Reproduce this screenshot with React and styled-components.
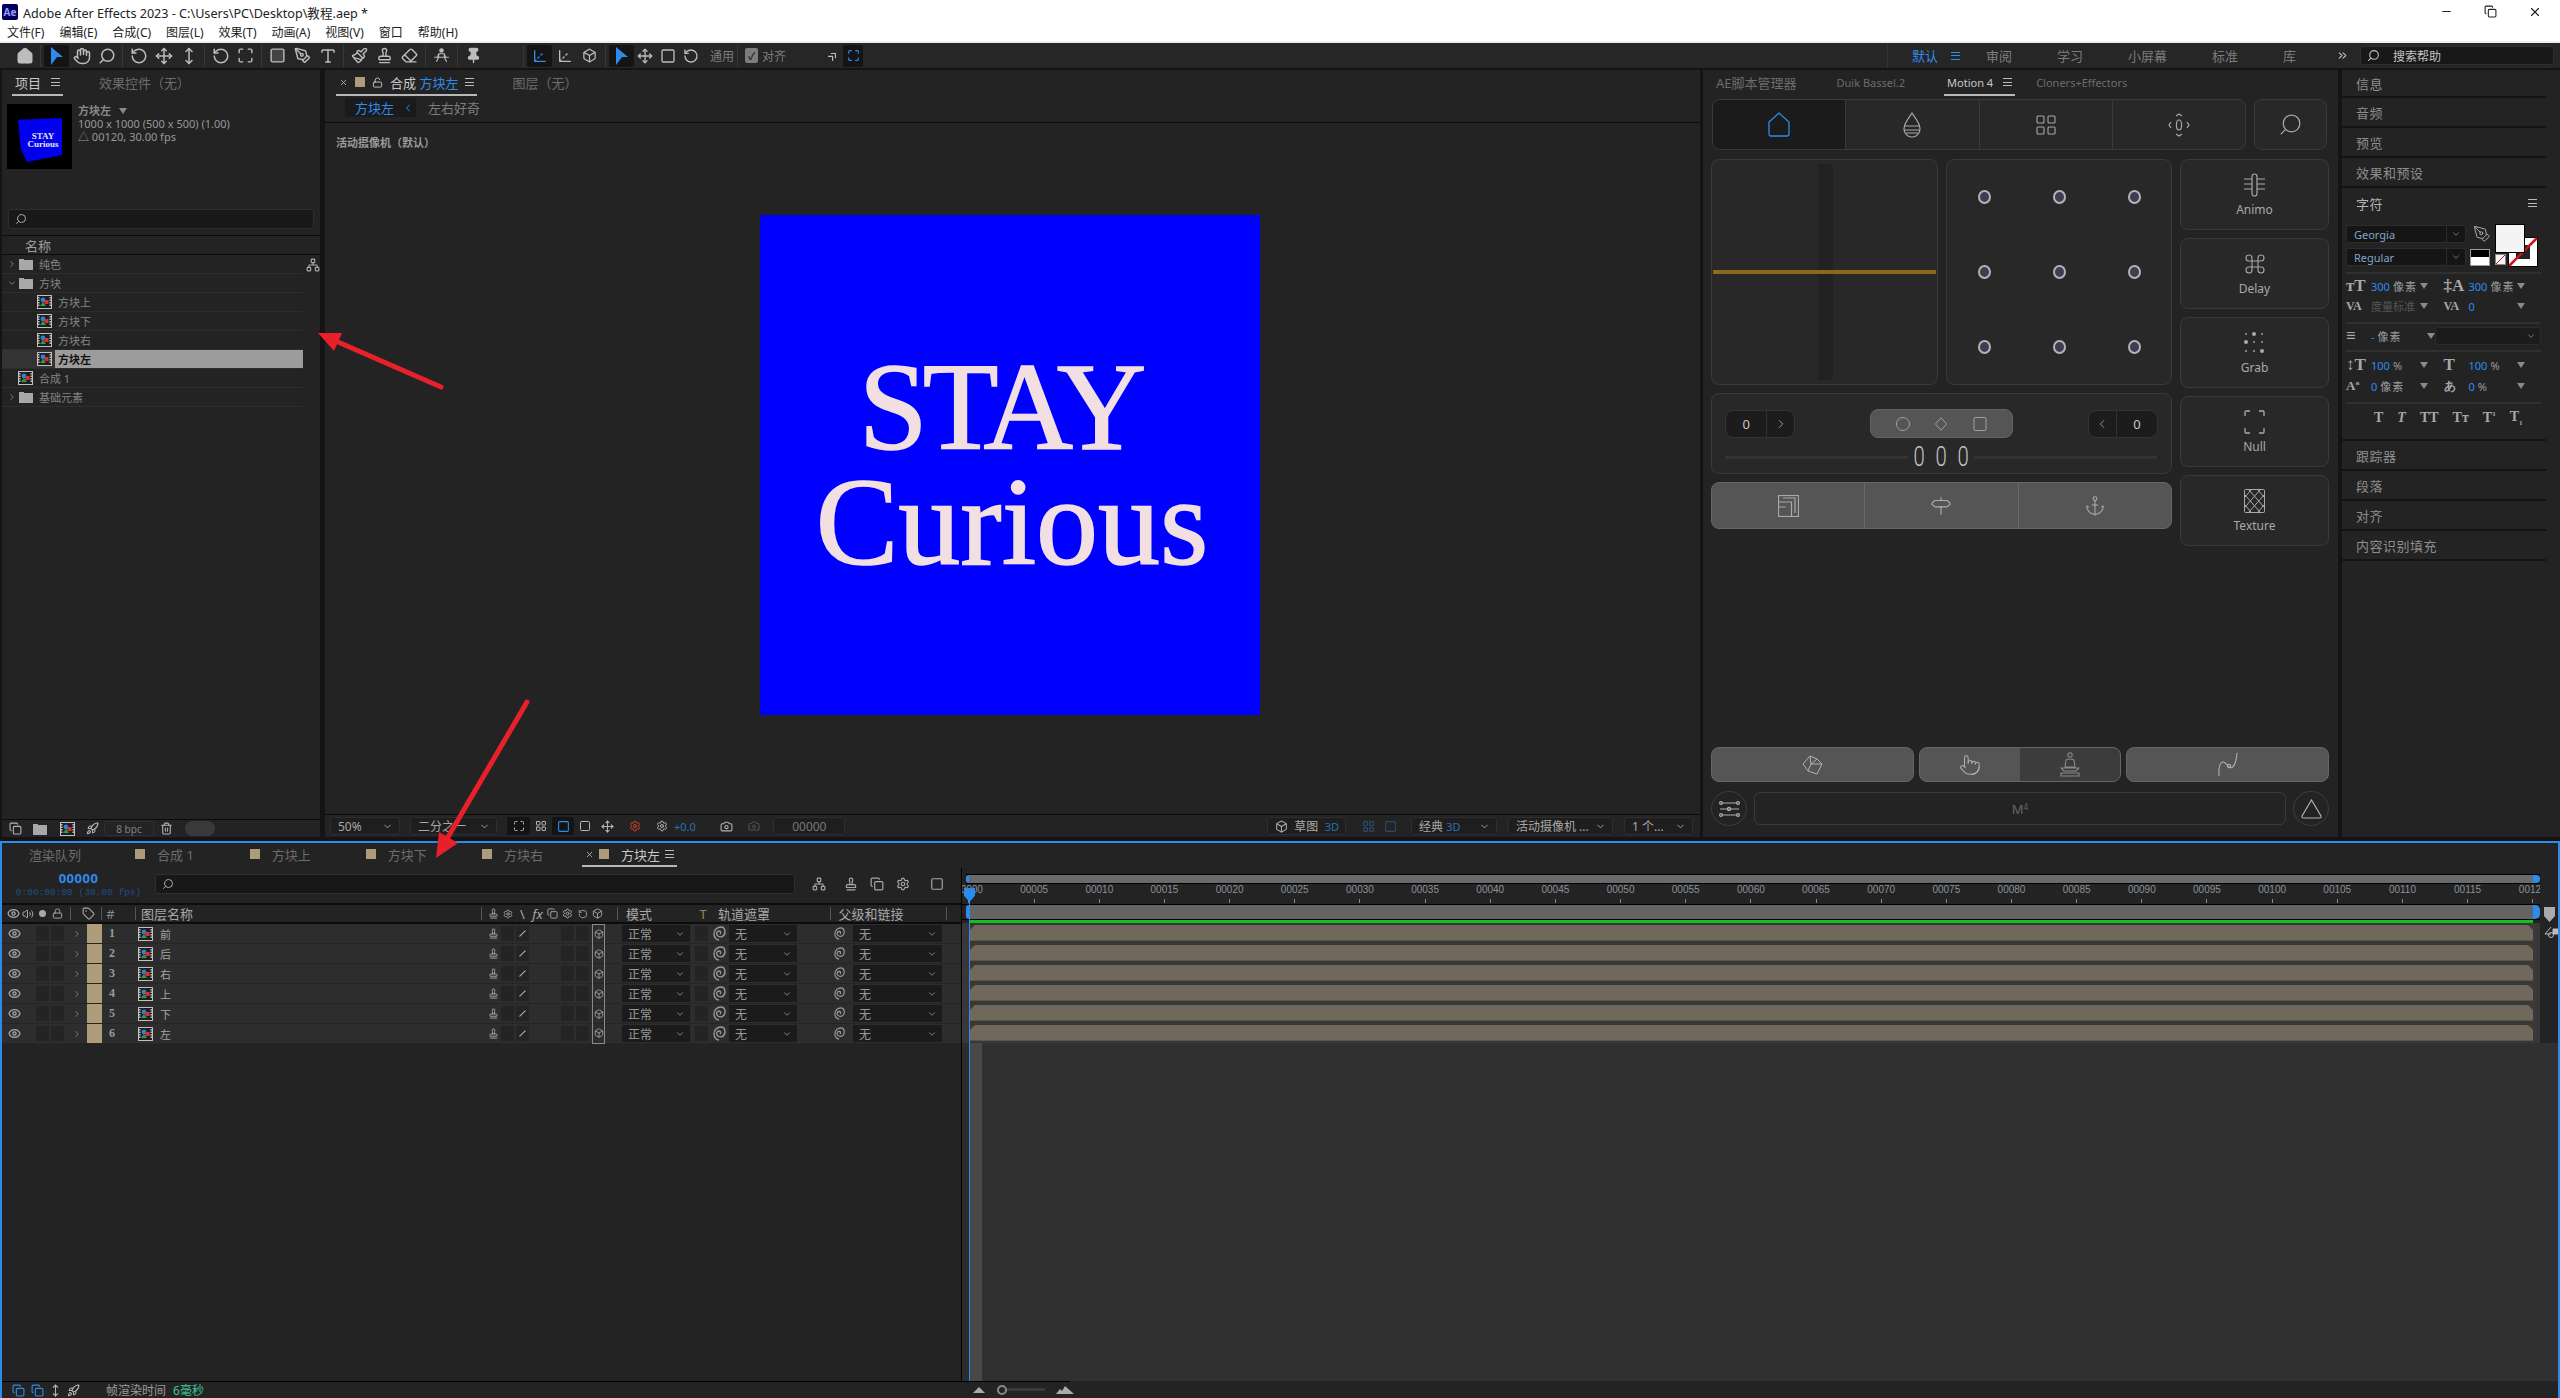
import React from 'react'
import styled, { createGlobalStyle } from 'styled-components'
import {
	Anchor, Axis3d, Box, ChevronDown, ChevronLeft, ChevronRight, ChevronsRight, Command, Eraser, Eye, Hand, Home,
	LayoutGrid, Lock, LockOpen, Maximize, Minus, Move, MoveVertical, Paintbrush, PenTool, Pin, Pointer, RotateCcw,
	Search, Signpost, Square, Stamp, Tag, Type, Volume2, X, Copy, Camera, Settings, Trash2, Rocket, Network
} from 'lucide-react'

const BLUE = '#2d8ceb'
const SANS = '"Noto Sans", "Noto Sans CJK SC", sans-serif'

const GlobalStyle = createGlobalStyle`
	html, body { margin: 0; background: #141414; overflow: hidden; }
	* { box-sizing: border-box; }
	body { font-family: ${SANS}; font-size: 12px; color: #a8a8a8; }
	svg { display: block; flex-shrink: 0; }
`

const Shell = styled.div`
	width: 2560px;
	height: 1398px;
	display: flex;
	flex-direction: column;
	position: relative;
	overflow: hidden;
`

const TitleBar = styled.div`
	height: 22px;
	background: #fff;
	color: #222;
	display: flex;
	align-items: center;
	padding: 2px 0 0 2px;
	font-size: 12.6px;
`

const AeLogo = styled.div`
	width: 16px;
	height: 16px;
	background: #00005b;
	color: #9999ff;
	border-radius: 2px;
	font-size: 10px;
	font-weight: 700;
	display: flex;
	align-items: center;
	justify-content: center;
	margin-right: 5px;
`

const WinButtons = styled.div`
	margin-left: auto;
	display: flex;
	color: #222;
	& > svg { margin-right: 31px; }
	& > svg:last-child { margin-right: 18px; }
`

const MenuBar = styled.div`
	height: 21px;
	background: #fff;
	border-bottom: 2px solid #eee;
	color: #222;
	display: flex;
	align-items: center;
	gap: 15px;
	padding-left: 7px;
	font-size: 12px;
`

const Toolbar = styled.div`
	height: 27px;
	background: #262626;
	border-bottom: 2px solid #141414;
	display: flex;
	align-items: center;
	padding-left: 12px;
`

const ToolGroup = styled.div`
	display: flex;
	align-items: center;
	height: 22px;
	margin-left: ${p => p.$ml ?? 3}px;
	padding-left: ${p => p.$plain ? 0 : 3}px;
	border-left: ${p => p.$plain ? 'none' : '1px solid #383838'};
`

const ToolSlot = styled.div`
	width: ${p => p.$w || 25}px;
	height: 22px;
	display: flex;
	align-items: center;
	justify-content: center;
	color: #bcbcbc;
	${p => p.$on && `
		background: #141414;
		border-radius: 3px;
		color: ${BLUE};
	`}
`

const ToolText = styled.span`
	color: #7c7c7c;
	font-size: 12px;
	margin-left: ${p => p.$ml || 0}px;
`

const CheckBox = styled.div`
	width: 13px;
	height: 15px;
	background: #7d7d7d;
	border-radius: 2px;
	color: #222;
	font-size: 10px;
	font-weight: 700;
	display: flex;
	align-items: center;
	justify-content: center;
	margin: 0 4px;
`

const Workspace = styled.div`
	margin-left: auto;
	width: 673px;
	height: 25px;
	border-left: 1px solid #333;
	display: flex;
	align-items: center;
	padding-left: 24px;
`

const WsItem = styled.span`
	font-size: 13px;
	color: ${p => p.$active ? BLUE : '#7c7c7c'};
	margin-right: ${p => p.$mr ?? 45}px;
`

const SearchHelp = styled.div`
	width: 194px;
	height: 19px;
	background: #181818;
	border: 1px solid #2e2e2e;
	border-radius: 3px;
	display: flex;
	align-items: center;
	padding-left: 6px;
	gap: 13px;
	color: #c4c4c4;
	font-size: 12px;
	margin-left: 11px;
`

const TopRow = styled.div`
	height: 767px;
	display: flex;
`

const Panel = styled.div`
	width: ${p => p.$w}px;
	margin-left: ${p => p.$ml || 0}px;
	background: #232323;
	display: flex;
	flex-direction: column;
	flex-shrink: 0;
`

const TabRow = styled.div`
	height: 26px;
	flex-shrink: 0;
	display: flex;
	align-items: flex-start;
	padding-left: ${p => p.$pl || 0}px;
`

const Tab = styled.div`
	height: 26px;
	display: flex;
	align-items: center;
	gap: ${p => p.$gap ?? 9}px;
	padding: 0 3px;
	font-size: ${p => p.$fs || 13}px;
	margin-left: ${p => p.$ml || 0}px;
	color: ${p => p.$active ? '#c8c8c8' : '#6c6c6c'};
	border-bottom: 2px solid ${p => p.$active ? '#b8b8b8' : 'transparent'};
	white-space: nowrap;
`

const TlTab = styled(Tab)`
	height: 24px;
`

const Swatch = styled.span`
	display: inline-block;
	width: 10px;
	height: 10px;
	background: #ad9c79;
	flex-shrink: 0;
`

const BlueText = styled.span`
	color: ${BLUE};
`

const Burger = styled.span`
	width: 9px;
	height: 8px;
	flex-shrink: 0;
	border-top: 1px solid currentColor;
	border-bottom: 1px solid currentColor;
	position: relative;
	color: #bbb;
	&::after {
		content: '';
		position: absolute;
		left: 0;
		right: 0;
		top: 2.5px;
		height: 1px;
		background: currentColor;
	}
`

/* project panel */
const ProjectInfo = styled.div`
	height: 113px;
	flex-shrink: 0;
	display: flex;
	padding: 8px 0 0 5px;
`

const Thumb = styled.div`
	width: 65px;
	height: 65px;
	background: #000;
	position: relative;
	margin-right: 6px;
`

const ThumbCube = styled.div`
	position: absolute;
	left: 11px;
	top: 14px;
	width: 44px;
	height: 44px;
	background: #0000ee;
	clip-path: polygon(0 4%, 100% 0, 100% 84%, 20% 100%, 6% 70%);
	color: #e8e8e8;
	font: 700 9px/8px "Liberation Serif", serif;
	text-align: center;
	padding-top: 14px;
	padding-left: 6px;
`

const InfoLines = styled.div`
	font-size: 11px;
	line-height: 13px;
	color: #989898;
	& > b { color: #888; display: flex; align-items: center; gap: 8px; }
`

const SearchField = styled.div`
	height: 20px;
	flex-shrink: 0;
	margin: 0 6px;
	background: #181818;
	border: 1px solid #2e2e2e;
	border-radius: 3px;
	display: flex;
	align-items: center;
	padding-left: 6px;
	color: #aaa;
	width: ${p => p.$w ? `${p.$w}px` : 'auto'};
`

const NameHeader = styled.div`
	height: 20px;
	margin-top: 6px;
	flex-shrink: 0;
	border-top: 1px solid #0c0c0c;
	border-bottom: 1px solid #0c0c0c;
	font-size: 13px;
	display: flex;
	align-items: center;
	padding-left: 23px;
	color: #9c9c9c;
`

const FileList = styled.div`
	flex: 1;
	display: flex;
	position: relative;
`

const FileRows = styled.div`
	width: 301px;
`

const FileRow = styled.div`
	height: 19px;
	display: flex;
	align-items: center;
	border-bottom: 1px solid #2d2d2d;
	font-size: 11px;
	color: #838383;
	padding-left: ${p => p.$pl}px;
	${p => p.$selected && 'background: #333;'}
`

const FileName = styled.span`
	margin-left: 3px;
	flex: 1;
	height: 100%;
	display: flex;
	align-items: center;
	padding-left: 3px;
	${p => p.$selected && `
		background: #9c9c9c;
		color: #111;
		font-weight: 700;
	`}
`

const HierSlot = styled.div`
	padding: 3px 0 0 3px;
	color: #aaa;
`

const PanelFooter = styled.div`
	height: ${p => p.$h}px;
	flex-shrink: 0;
	border-top: 1px solid #0c0c0c;
	display: flex;
	align-items: center;
	padding-left: ${p => p.$pl || 0}px;
	padding-right: ${p => p.$pr || 0}px;
	color: #b4b4b4;
`

const BpcBox = styled.div`
	width: 50px;
	height: 15px;
	border: 1px solid #2e2e2e;
	border-radius: 2px;
	font-size: 10px;
	color: #808080;
	display: flex;
	align-items: center;
	justify-content: center;
`

const FooterPill = styled.div`
	width: 30px;
	height: 15px;
	border-radius: 8px;
	background: #3a3a3a;
	margin-left: 7px;
`

const FooterIcon = styled.div`
	width: ${p => p.$w || 24}px;
	height: 18px;
	display: flex;
	align-items: center;
	justify-content: center;
	margin-left: ${p => p.$ml || 0}px;
	color: ${p => p.$c || '#b4b4b4'};
	${p => p.$box && `
		background: #141414;
		border-radius: 2px;
	`}
`

/* comp viewer */
const CrumbRow = styled.div`
	height: 27px;
	flex-shrink: 0;
	border-bottom: 1px solid #0c0c0c;
	display: flex;
	align-items: center;
	padding: 0 0 3px 20px;
	font-size: 13px;
	color: #7c7c7c;
`

const Crumb = styled.div`
	width: 71px;
	height: 19px;
	background: #1a1a1a;
	border-radius: 3px;
	display: flex;
	align-items: center;
	justify-content: space-between;
	color: ${BLUE};
	padding: 0 2px 0 10px;
	margin-right: 12px;
`

const CompArea = styled.div`
	flex: 1;
	position: relative;
	display: flex;
	align-items: center;
	justify-content: center;
	padding: 0 5px 7px 0;
`

const ViewerLabel = styled.div`
	position: absolute;
	left: 11px;
	top: 11px;
	font-size: 11px;
	font-weight: 700;
	color: #9a9a9a;
`

const Canvas = styled.div`
	width: 500px;
	height: 500px;
	background: #0000ff;
	color: #f2dfe2;
	font-family: "Liberation Serif", "Noto Serif", serif;
	font-size: 124px;
	line-height: 115px;
	text-align: center;
	padding: 135px 0 0 4px;
	-webkit-text-stroke: 1.5px #f2dfe2;
`

const CanvasTop = styled.div`
	letter-spacing: -5px;
	padding-right: 24px;
`

const FooterSelect = styled.div`
	width: ${p => p.$w}px;
	height: 18px;
	margin-left: ${p => p.$ml || 0}px;
	border: 1px solid #2e2e2e;
	border-radius: 3px;
	background: #1e1e1e;
	display: flex;
	align-items: center;
	justify-content: space-between;
	padding: 0 6px 0 7px;
	font-size: 12px;
	color: #a8a8a8;
	white-space: nowrap;
`

const DimBlue = styled.span`
	color: #2a6fb5;
	font-size: 11px;
	margin-left: ${p => p.$ml || 0}px;
`

/* motion */
const MotionBody = styled.div`
	flex: 1;
	display: flex;
	flex-direction: column;
	padding: 3px 9px 11px 8px;
`

const NavLine = styled.div`
	display: flex;
	gap: 8px;
	padding-left: 1px;
`

const NavGroup = styled.div`
	width: ${p => p.$w}px;
	height: 51px;
	display: flex;
	border: 1px solid #3a3a3a;
	border-radius: 8px;
	overflow: hidden;
	background: #282828;
`

const NavCell = styled.div`
	flex: 1;
	display: flex;
	align-items: center;
	justify-content: center;
	color: #a8a8a8;
	background: ${p => p.$on ? '#1b1b1b' : 'transparent'};
	& + & { border-left: 1px solid #3a3a3a; }
`

const MotionGrid = styled.div`
	display: flex;
	gap: 8px;
	margin-top: 9px;
`

const MotionLeft = styled.div`
	width: 461px;
	display: flex;
	flex-direction: column;
	gap: 8px;
`

const BoxPair = styled.div`
	display: flex;
	gap: 8px;
`

const FrameBox = styled.div`
	width: ${p => p.$w ? `${p.$w}px` : 'auto'};
	height: ${p => p.$h}px;
	border: 1px solid #3a3a3a;
	border-radius: 8px;
	background: #282828;
`

const GraphBox = styled(FrameBox)`
	display: flex;
	align-items: center;
	padding: 0 1px;
	background: linear-gradient(to right, #282828 106px, #222 106px, #222 121px, #282828 121px);
	background-size: 100% 216px;
	background-position: 0 4px;
	background-repeat: no-repeat;
	background-color: #282828;
`

const GoldLine = styled.div`
	width: 100%;
	height: 4px;
	background: #8b6a17;
`

const DotGrid = styled(FrameBox)`
	display: grid;
	grid-template-columns: repeat(3, 75px);
	grid-template-rows: repeat(3, 75px);
	justify-content: center;
	align-content: center;
	justify-items: center;
	align-items: center;
`

const Dot = styled.div`
	width: 13px;
	height: 14px;
	border-radius: 50%;
	border: 2px solid #b4b4b4;
	background: #3e3d52;
`

const ShapeBox = styled(FrameBox)`
	padding: 15px 13px 0;
`

const ShapeRow = styled.div`
	display: flex;
	justify-content: space-between;
	align-items: center;
`

const Stepper = styled.div`
	width: 70px;
	height: 28px;
	background: #1c1c1c;
	border: 1px solid #333;
	border-radius: 8px;
	display: flex;
	align-items: center;
	color: #c8c8c8;
	font-size: 13px;
`

const StepNum = styled.div`
	flex: ${p => p.$grow};
	height: 100%;
	display: flex;
	align-items: center;
	justify-content: center;
	& + & { border-left: 1px solid #333; }
`

const ShapeGroup = styled.div`
	width: 143px;
	height: 29px;
	background: #555;
	border: 1px solid #636363;
	border-radius: 8px;
	display: flex;
	align-items: center;
	justify-content: space-around;
	padding: 0 13px;
	color: #a0a0a0;
`

const SliderRow = styled.div`
	display: flex;
	align-items: center;
	margin-top: 9px;
	padding-right: 1px;
`

const SliderTrack = styled.div`
	flex: 1;
	height: 3px;
	background: #333;
`

const BigDigit = styled.span`
	width: 22px;
	text-align: center;
	font: 300 27px/20px Roboto, sans-serif;
	color: #c4c4c4;
	transform: scaleX(.75);
`

const ActionBar = styled.div`
	height: ${p => p.$h}px;
	width: ${p => p.$w ? `${p.$w}px` : 'auto'};
	border: 1px solid #666;
	border-radius: 8px;
	background: #555;
	display: flex;
	overflow: hidden;
`

const ActionCell = styled.div`
	flex: 1;
	display: flex;
	align-items: center;
	justify-content: center;
	color: ${p => p.$dim ? '#8a8a8a' : '#b0b0b0'};
	background: ${p => p.$dim ? '#3c3c3c' : 'transparent'};
	${p => p.$line && 'border-left: 1px solid #6a6a6a;'}
`

const MotionRight = styled.div`
	width: 149px;
	display: flex;
	flex-direction: column;
	gap: 8px;
`

const ToolCard = styled.div`
	height: 71px;
	border: 1px solid #3a3a3a;
	border-radius: 8px;
	background: #282828;
	display: flex;
	flex-direction: column;
	align-items: center;
	padding-top: 13px;
	gap: 5px;
	color: #a8a8a8;
	font-size: 12px;
	line-height: 15px;
`

const MotionBottom = styled.div`
	margin-top: auto;
	display: flex;
	flex-direction: column;
	gap: 9px;
`

const BottomRow = styled.div`
	display: flex;
	gap: ${p => p.$gap}px;
	align-items: center;
`

const RoundBtn = styled.div`
	width: 36px;
	height: 35px;
	border: 1px solid #3a3a3a;
	border-radius: 50%;
	display: flex;
	align-items: center;
	justify-content: center;
	color: #b0b0b0;
`

const MBar = styled.div`
	flex: 1;
	height: 33px;
	border: 1px solid #3a3a3a;
	border-radius: 6px;
	display: flex;
	align-items: center;
	justify-content: center;
	color: #666;
	font-size: 13px;
	& sup { font-size: 8px; margin-top: -4px; }
`

/* right stack */
const StackItem = styled.div`
	height: ${p => p.$h || 30}px;
	display: flex;
	align-items: center;
	padding-left: 14px;
	font-size: 13px;
	color: #8e8e8e;
	letter-spacing: 0.5px;
	border-bottom: 2px solid #141414;
	width: 204px;
`

const StackHeader = styled(StackItem)`
	border-bottom: none;
	color: #b4b4b4;
	justify-content: space-between;
	padding-right: 9px;
	height: 30px;
`

const CharBody = styled.div`
	width: 204px;
	height: 223px;
	padding: 7px 5px 0 4px;
	border-bottom: 2px solid #141414;
`

const FontArea = styled.div`
	display: flex;
	height: 42px;
`

const FontSelects = styled.div`
	width: 123px;
	display: flex;
	flex-direction: column;
	gap: 5px;
`

const FontSelect = styled.div`
	height: 18px;
	background: #151515;
	border: 1px solid #2c2c2c;
	border-radius: 2px;
	display: flex;
	align-items: center;
	justify-content: space-between;
	padding-left: 7px;
	color: #7fa6cc;
	font-size: 11px;
	& > span:last-child {
		width: 19px;
		height: 100%;
		border-left: 1px solid #2c2c2c;
		display: flex;
		align-items: center;
		justify-content: center;
		color: #888;
	}
`

const ColorArea = styled.div`
	position: relative;
	width: 72px;
	height: 42px;
	margin-left: 4px;
`

const ColorTop = styled.div`
	position: absolute;
	left: 25px;
	top: -1px;
	width: 30px;
	height: 29px;
	background: #f4f4f4;
	border: 1px solid #000;
`

const ColorBack = styled.svg`
	position: absolute;
	left: 38px;
	top: 12px;
`

const MiniBW = styled.div`
	position: absolute;
	left: 0;
	top: 24px;
	width: 20px;
	height: 17px;
	border: 1px solid #999;
	background: linear-gradient(#000 50%, #fff 50%);
`

const Dropper = styled.div`
	position: absolute;
	left: 3px;
	top: 0;
	color: #b0b0b0;
`

const NoneSwatch = styled.svg`
	position: absolute;
	left: 25px;
	top: 29px;
`

const CharDivider = styled.div`
	height: 2px;
	background: #303030;
	margin: ${p => p.$m || '5px 0 2px'};
	width: 195px;
`

const CharRow = styled.div`
	display: flex;
	height: ${p => p.$h || 20}px;
	align-items: center;
`

const CharHalf = styled.div`
	width: 105px;
	display: flex;
	align-items: center;
	padding-right: 16px;
	color: #b0b0b0;
`

const CharIcon = styled.span`
	width: 25px;
	flex-shrink: 0;
	font: 700 ${p => p.$fs || 17}px/18px "Liberation Serif", serif;
	color: #a8a8a8;
	white-space: nowrap;
`

const CharValue = styled.span`
	flex: 1;
	font-size: 11px;
	color: ${p => p.$dim ? '#555' : BLUE};
	white-space: nowrap;
	& > em { font-style: normal; color: #9c9c9c; margin-left: 3px; letter-spacing: 1px; }
`

const Caret = styled.span`
	width: 0;
	height: 0;
	border-left: 4px solid transparent;
	border-right: 4px solid transparent;
	border-top: 6px solid #8a8a8a;
	flex-shrink: 0;
`

const LeadSelect = styled.div`
	width: 106px;
	height: 18px;
	background: #1c1c1c;
	border: 1px solid #2c2c2c;
	border-radius: 3px;
	display: flex;
	align-items: center;
	justify-content: flex-end;
	padding-right: 4px;
	color: #888;
`

const LeadHalf = styled(CharHalf)`
	width: 89px;
	padding-right: 0;
`

const StyleRow = styled.div`
	display: flex;
	align-items: center;
	height: 24px;
	padding-left: 28px;
	gap: 14px;
	font: 700 14px/1 "Liberation Serif", serif;
	color: #a8a8a8;
	& sup, & sub { font-size: 7px; }
`

/* timeline */
const Timeline = styled.div`
	margin-top: 4px;
	flex: 1;
	background: #232323;
	border-top: 2px solid ${BLUE};
	border-left: 2px solid ${BLUE};
	border-right: 2px solid ${BLUE};
	display: flex;
	flex-direction: column;
	min-height: 0;
`

const TlTabs = styled.div`
	height: 25px;
	flex-shrink: 0;
	display: flex;
	padding-left: 24px;
`

const TlMain = styled.div`
	flex: 1;
	display: flex;
	min-height: 0;
`

const TlLeft = styled.div`
	width: 960px;
	flex-shrink: 0;
	display: flex;
	flex-direction: column;
	border-right: 1px solid #000;
`

const TlTools = styled.div`
	height: 37px;
	flex-shrink: 0;
	border-bottom: 2px solid #0c0c0c;
	display: flex;
	align-items: center;
	padding-bottom: 4px;
`

const TimeBlock = styled.div`
	width: 153px;
	margin-right: -6px;
	text-align: center;
	padding-top: 4px;
	& > b { display: block; color: ${BLUE}; font: 700 13px/15px "Noto Sans", sans-serif; letter-spacing: 0.5px; }
	& > span { display: block; color: #1d4f86; font: 9.5px/14px "Liberation Mono", monospace; white-space: nowrap; }
`

const TlHeader = styled.div`
	height: 19px;
	flex-shrink: 0;
	border-bottom: 2px solid #0c0c0c;
	display: flex;
	align-items: center;
	font-size: 13px;
	color: #a4a4a4;
`

const HeadSep = styled.div`
	width: 1px;
	height: 13px;
	flex-shrink: 0;
	background: #555;
	margin-left: ${p => p.$ml || 0}px;
`

const TinyDot = styled.span`
	width: 7px;
	height: 7px;
	border-radius: 50%;
	background: #a8a8a8;
`

const LayerRow = styled.div`
	height: 20px;
	flex-shrink: 0;
	display: flex;
	align-items: center;
	background: #2d2d2d;
	border-bottom: 1px solid #252525;
`

const Slot = styled.div`
	width: ${p => p.$w}px;
	margin-left: ${p => p.$ml || 0}px;
	height: ${p => p.$h ? `${p.$h}px` : 'auto'};
	flex-shrink: 0;
	display: flex;
	align-items: center;
	justify-content: ${p => p.$start ? 'flex-start' : 'center'};
	color: ${p => p.$c || '#a8a8a8'};
	white-space: nowrap;
`

const DarkSq = styled.div`
	width: 13px;
	height: 15px;
	margin-left: ${p => p.$ml || 0}px;
	flex-shrink: 0;
	background: #242424;
	color: #b0b0b0;
	display: flex;
	align-items: center;
	justify-content: center;
`

const LabelBlock = styled.div`
	width: 15px;
	height: 19px;
	flex-shrink: 0;
	background: #ad9c79;
`

const LayerNum = styled.div`
	width: 20px;
	font: 700 12px "Liberation Serif", serif;
	color: #9a9a9a;
	text-align: center;
`

const LayerName = styled.div`
	width: 327px;
	margin-left: 7px;
	font-size: 11px;
	color: #a4a4a4;
`

const CubeCell = styled.div`
	width: 13px;
	height: 20px;
	margin-left: 3px;
	border-left: 1px solid #8a8a8a;
	border-right: 1px solid #8a8a8a;
	${p => p.$first && 'border-top: 1px solid #8a8a8a;'}
	${p => p.$last && 'border-bottom: 1px solid #8a8a8a;'}
	display: flex;
	align-items: center;
	justify-content: center;
	color: #aaa;
`

const RowSelect = styled.div`
	width: ${p => p.$w}px;
	height: 17px;
	margin-left: ${p => p.$ml || 0}px;
	flex-shrink: 0;
	background: #1b1b1b;
	font-size: 12px;
	color: #999;
	display: flex;
	align-items: center;
	justify-content: space-between;
	padding: 0 5px 0 6px;
`

const TlFill = styled.div`
	flex: 1;
`

const Graph = styled.div`
	flex: 1;
	display: flex;
	flex-direction: column;
	position: relative;
	min-width: 0;
`

const NavTrack = styled.div`
	margin-top: 6px;
	height: 10px;
	flex-shrink: 0;
	margin-left: 4px;
	width: 1574px;
	display: flex;
	border-top: 1px solid #000;
	border-bottom: 1px solid #000;
`

const BlueCap = styled.div`
	width: ${p => p.$w}px;
	background: ${BLUE};
	border-radius: ${p => p.$left ? '5px 0 0 5px' : '0 5px 5px 0'};
`

const GrayFill = styled.div`
	flex: 1;
	background: ${p => p.$c};
`

const Ruler = styled.div`
	width: 1578px;
	height: 20px;
	flex-shrink: 0;
	overflow: hidden;
	display: flex;
`

const RulerCell = styled.div`
	width: 65.17px;
	flex-shrink: 0;
	font: 10px/12px "Liberation Sans", sans-serif;
	color: #8b929a;
	text-align: center;
	display: flex;
	flex-direction: column;
	align-items: center;
	justify-content: space-between;
	margin-left: ${p => p.$first ? -25.6 : 0}px;
	&::after {
		content: '';
		width: 1px;
		height: 4px;
		background: #888;
		margin-bottom: 1px;
	}
`

const WorkLine = styled.div`
	display: flex;
	height: 16px;
	flex-shrink: 0;
	width: 1578px;
	padding-left: 4px;
	border-top: 1px solid #000;
	border-bottom: 1px solid #000;
`

const GreenLine = styled.div`
	height: 3px;
	flex-shrink: 0;
	margin-left: 7px;
	width: 1564px;
	background: #12c024;
`

const GraphRows = styled.div`
	width: 1578px;
	flex-shrink: 0;
`

const BarRow = styled.div`
	height: 20px;
	background: #383838;
	padding: 2px 7px 0 8px;
`

const Bar = styled.div`
	height: 16px;
	background: #70695b;
	border-bottom: 1px solid #5a5549;
	position: relative;
	&::before, &::after {
		content: '';
		position: absolute;
		top: 0;
		width: 0;
		height: 0;
		border-top: 5px solid #3f3b33;
	}
	&::before { left: 0; border-right: 5px solid transparent; }
	&::after { right: 0; border-left: 5px solid transparent; }
`

const GraphFill = styled.div`
	flex: 1;
	background: linear-gradient(to right, #2c2c2c 7px, #484848 7px, #484848 20px, #303030 20px);
`

const Playhead = styled.div`
	position: absolute;
	left: 7px;
	top: 32px;
	bottom: 0;
	width: 1px;
	background: ${BLUE};
	&::before {
		content: '';
		position: absolute;
		left: -5px;
		top: -12px;
		width: 11px;
		height: 14px;
		background: ${BLUE};
		clip-path: polygon(0 0, 100% 0, 100% 55%, 50% 100%, 0 55%);
	}
`

const RightMarker = styled.div`
	position: absolute;
	left: 1582px;
	top: 39px;
	color: #aaa;
	display: flex;
	flex-direction: column;
	gap: 4px;
`

const StatusBar = styled.div`
	height: 17px;
	flex-shrink: 0;
	display: flex;
	align-items: center;
`

const StatusLeft = styled.div`
	width: 1068px;
	height: 17px;
	border-top: 1px solid #000;
	display: flex;
	align-items: center;
	padding-left: 6px;
	font-size: 12px;
	color: #9c9c9c;
`

const StatusLabel = styled.span`
	margin-left: 24px;
`

const StatusGreen = styled.span`
	color: #3fc39d;
	margin-left: 7px;
`

const ZoomSlider = styled.div`
	margin-left: -97px;
	display: flex;
	align-items: center;
`

const ZoomKnob = styled.div`
	width: 10px;
	height: 10px;
	border: 2px solid #8a8a8a;
	border-radius: 50%;
	margin-left: 12px;
`

const ZoomTrack = styled.div`
	width: 38px;
	height: 3px;
	background: #3a3a3a;
	margin-right: 11px;
`

const FlipSearch = styled(Search)`
	transform: scaleX(-1);
`

const ArrowLayer = styled.svg`
	position: absolute;
	left: 0;
	top: 0;
	pointer-events: none;
`

/* drawings */
const CompIcon = ({ size = 15 }) => (
	<svg width={size} height={size - 1} viewBox="0 0 15 14">
		<rect x=".5" y=".5" width="14" height="13" fill="#1e1e1e" stroke="#c0c0c0" />
		<path d="M1.5 2v10M13.5 2v10" stroke="#c0c0c0" strokeWidth="2" strokeDasharray="1.5 1" />
		<circle cx="6" cy="5" r="2.4" fill="#2f7fd8" />
		<rect x="7.5" y="5" width="4" height="4" fill="#d8302c" />
		<path d="M3 11l3-4 3 4z" fill="#2ea043" />
	</svg>
)

const FolderIcon = () => (
	<svg width="14" height="12" viewBox="0 0 14 12"><path d="M0 1h5v1h9v10H0z" fill="#a8a8a8" /></svg>
)

const Arrow = ({ fill }) => (
	<svg width="14" height="18" viewBox="0 0 14 18"><path d="M1 0l12 10H7l-6 8z" fill={fill} /></svg>
)

const SoloEye = () => <Eye size={13} strokeWidth={2.4} />

const Puppet = () => (
	<svg width="17" height="15" viewBox="0 0 15 13" fill="none" stroke="currentColor">
		<circle cx="7.5" cy="2" r="1.5" fill="currentColor" />
		<path d="M1 8h3l1-3h5l1 3h3M5 5v3h5V5M5 8l-2 4M10 8l2 4" />
	</svg>
)

const Spiral = ({ size = 14 }) => (
	<svg width={size} height={size + 1} viewBox="0 0 14 15" fill="none" stroke="#9a9a9a" strokeWidth="1.4">
		<path d="M7 8c1-1 1-3-1-3S3 7 4 9s5 3 7 0 1-8-3-8S1 4 1 8s3 6 5 6" />
	</svg>
)

const HouseIcon = () => (
	<svg width="22" height="25" viewBox="0 0 22 25" fill="none" stroke={BLUE} strokeWidth="1.3">
		<path d="M1 10L11 1l10 9v12q0 2-2 2H3q-2 0-2-2z" />
	</svg>
)

const DropIcon = () => (
	<svg width="18" height="26" viewBox="0 0 18 26" fill="none" stroke="#a8a8a8" strokeWidth="1.2">
		<path d="M9 1C6 6 1 11 1 17a8 8 0 0016 0C17 11 12 6 9 1zM1 14h16M1.5 18h15M3 21h12" />
	</svg>
)

const ZeroIcon = () => (
	<svg width="22" height="26" viewBox="0 0 22 26" fill="none" stroke="#a8a8a8" strokeWidth="1.2">
		<ellipse cx="11" cy="13" rx="2.6" ry="5" />
		<path d="M3 10l-2 3 2 3M19 10l2 3-2 3M8 4l3-2 3 2M8 22l3 2 3-2" />
	</svg>
)

const AnimoIcon = () => (
	<svg width="21" height="24" viewBox="0 0 21 24" fill="none" stroke="#aaa" strokeWidth="1.2">
		<rect x="8" y="1" width="5" height="22" rx="2.5" />
		<path d="M0 6h8M0 11h8M0 16h8M13 6h8M13 11h8M13 16h8" />
	</svg>
)

const GrabIcon = () => (
	<svg width="21" height="24" viewBox="0 0 21 24" fill="#aaa">
		<circle cx="10" cy="3" r="2" /><circle cx="2" cy="11" r="2" /><circle cx="18" cy="20" r="2" />
		<circle cx="2" cy="3" r=".9" /><circle cx="18" cy="3" r=".9" /><circle cx="10" cy="11" r=".9" />
		<circle cx="18" cy="11" r=".9" /><circle cx="2" cy="20" r=".9" /><circle cx="10" cy="20" r=".9" />
	</svg>
)

const NullIcon = () => (
	<svg width="21" height="24" viewBox="0 0 21 24" fill="none" stroke="#aaa" strokeWidth="1.3">
		<path d="M1 6V2q0-1 1-1h4M15 1h4q1 0 1 1v4M20 18v4q0 1-1 1h-4M6 23H2q-1 0-1-1v-4" />
	</svg>
)

const TextureIcon = () => (
	<svg width="21" height="24" viewBox="0 0 21 24" fill="none" stroke="#aaa" strokeWidth="1">
		<rect x=".5" y=".5" width="20" height="23" rx="1" />
		<path d="M1 6L16 23M5 1l15 17M1 16l6 7M14 1l6 7M20 6L5 23M16 1L1 18M20 16l-6 7M7 1L1 8" />
	</svg>
)

const LayersIcon = () => (
	<svg width="21" height="22" viewBox="0 0 21 22" fill="none" stroke="#a8a8a8" strokeWidth="1.2">
		<rect x=".5" y=".5" width="20" height="21" /><path d="M.5 7h13v14.5M.5 12h7" /><path d="M5 3h12v15" />
	</svg>
)

const CardsIcon = () => (
	<svg width="21" height="20" viewBox="0 0 21 20" fill="none" stroke="#b0b0b0" strokeWidth="1">
		<path d="M1 9l7-8 7 3 5 5-5 10-9-3zM8 1l1 8M15 4l-6 5M20 9l-11 0M6 16l3-7" />
	</svg>
)

const CurveIcon = () => (
	<svg width="20" height="25" viewBox="0 0 20 25" fill="none" stroke="#b0b0b0" strokeWidth="1.1">
		<path d="M1 24C0 10 5 7 9 13s9 2 10-12" /><circle cx="11" cy="14" r="1.6" />
	</svg>
)

const SlidersIcon = () => (
	<svg width="21" height="16" viewBox="0 0 21 16" fill="none" stroke="#b0b0b0" strokeWidth="1.2">
		<path d="M3 2h15M1 8h19M3 14h15" /><circle cx="2" cy="2" r="1.4" /><circle cx="19" cy="2" r="1.4" />
		<circle cx="10" cy="8" r="1.6" /><circle cx="2" cy="14" r="1.4" /><circle cx="19" cy="14" r="1.4" />
	</svg>
)

const TriangleIcon = () => (
	<svg width="21" height="20" viewBox="0 0 21 20" fill="none" stroke="#b0b0b0" strokeWidth="1.2">
		<path d="M10.5 1L20 17q.5 2-1.5 2h-16Q.5 19 1 17z" />
	</svg>
)

const Meditate = () => (
	<svg width="20" height="25" viewBox="0 0 20 25" fill="none" stroke="#8a8a8a" strokeWidth="1.1">
		<circle cx="10" cy="3" r="2.2" /><path d="M5 15L6 8q4-2 8 0l1 7zM1 16h18l-3 3H4zM1 21h18v3H1z" />
	</svg>
)

const layers = ['前', '后', '右', '上', '下', '左']
const ticks = Array.from({ length: 25 }, (_, i) => String(i * 5).padStart(5, '0'))
const files = [
	{ name: '纯色', folder: true, chevron: 'right', pl: 5 },
	{ name: '方块', folder: true, chevron: 'down', pl: 5 },
	{ name: '方块上', pl: 35 },
	{ name: '方块下', pl: 35 },
	{ name: '方块右', pl: 35 },
	{ name: '方块左', pl: 35, selected: true },
	{ name: '合成 1', pl: 16 },
	{ name: '基础元素', folder: true, chevron: 'right', pl: 5 }
]
const tlTabs = ['合成 1', '方块上', '方块下', '方块右']
const menus = ['文件(F)', '编辑(E)', '合成(C)', '图层(L)', '效果(T)', '动画(A)', '视图(V)', '窗口', '帮助(H)']

const FileChevron = ({ dir }) => (
	<Slot $w={12} $c="#8a8a8a" $start>
		{dir === 'right' && <ChevronRight size={10} />}
		{dir === 'down' && <ChevronDown size={10} />}
	</Slot>
)

const ProjectPanel = () => (
	<Panel $w={318} $ml={2}>
		<TabRow $pl={10}>
			<Tab $active $gap={10}>项目 <Burger /></Tab>
			<Tab $ml={33}>效果控件（无）</Tab>
		</TabRow>
		<ProjectInfo>
			<Thumb><ThumbCube>STAY<br />Curious</ThumbCube></Thumb>
			<InfoLines>
				<b>方块左 <Caret /></b>
				<div>1000 x 1000 (500 x 500) (1.00)</div>
				<div>△ 00120, 30.00 fps</div>
			</InfoLines>
		</ProjectInfo>
		<SearchField><FlipSearch size={12} /></SearchField>
		<NameHeader>名称</NameHeader>
		<FileList>
			<FileRows>
				{files.map(f => (
					<FileRow key={f.name} $pl={f.pl} $selected={f.selected}>
						{f.chevron && <FileChevron dir={f.chevron} />}
						{f.folder ? <FolderIcon /> : <CompIcon />}
						<FileName $selected={f.selected}>{f.name}</FileName>
					</FileRow>
				))}
			</FileRows>
			<HierSlot><Network size={14} /></HierSlot>
		</FileList>
		<PanelFooter $h={18} $pl={2}>
			<FooterIcon $w={22}><Copy size={13} /></FooterIcon>
			<FooterIcon $w={28}><FolderIcon /></FooterIcon>
			<FooterIcon $w={26}><CompIcon /></FooterIcon>
			<FooterIcon $w={24}><Rocket size={13} /></FooterIcon>
			<BpcBox>8 bpc</BpcBox>
			<FooterIcon $w={24}><Trash2 size={13} /></FooterIcon>
			<FooterPill />
		</PanelFooter>
	</Panel>
)

const CompPanel = () => (
	<Panel $w={1375} $ml={5}>
		<TabRow $pl={11}>
			<Tab $active $gap={7}>
				<X size={9} /><Swatch /><LockOpen size={11} />
				<span>合成 <BlueText>方块左</BlueText></span><Burger />
			</Tab>
			<Tab $ml={32}>图层（无）</Tab>
		</TabRow>
		<CrumbRow>
			<Crumb>方块左 <ChevronLeft size={12} /></Crumb>
			左右好奇
		</CrumbRow>
		<CompArea>
			<ViewerLabel>活动摄像机（默认）</ViewerLabel>
			<Canvas><CanvasTop>STAY</CanvasTop>Curious</Canvas>
		</CompArea>
		<PanelFooter $h={23} $pl={5} $pr={7}>
			<FooterSelect $w={70}>50% <ChevronDown size={11} /></FooterSelect>
			<FooterSelect $w={87} $ml={10}>二分之一 <ChevronDown size={11} /></FooterSelect>
			<FooterIcon $w={23} $ml={10} $box><Maximize size={12} /></FooterIcon>
			<FooterIcon $w={22}><LayoutGrid size={12} /></FooterIcon>
			<FooterIcon $w={22} $box $c={BLUE}><Square size={13} /></FooterIcon>
			<FooterIcon $w={22}><Square size={12} /></FooterIcon>
			<FooterIcon $w={22}><Move size={13} /></FooterIcon>
			<FooterIcon $w={34} $c="#d8402c"><Settings size={12} /></FooterIcon>
			<FooterIcon $w={20}><Settings size={12} /></FooterIcon>
			<DimBlue $ml={2}>+0.0</DimBlue>
			<FooterIcon $w={40} $ml={11}><Camera size={13} /></FooterIcon>
			<FooterIcon $w={14} $c="#555"><Camera size={12} /></FooterIcon>
			<FooterSelect $w={72} $ml={12}><span style={{ margin: 'auto', color: '#777' }}>00000</span></FooterSelect>
			<FooterSelect $w={79} style={{ marginLeft: 'auto' }}><Box size={13} /> 草图 <DimBlue>3D</DimBlue></FooterSelect>
			<FooterIcon $w={22} $ml={11} $c="#2a4a70"><LayoutGrid size={13} /></FooterIcon>
			<FooterIcon $w={22} $c="#2a4a70"><Square size={13} /></FooterIcon>
			<FooterSelect $w={86} $ml={10}><span>经典 <DimBlue>3D</DimBlue></span><ChevronDown size={11} /></FooterSelect>
			<FooterSelect $w={105} $ml={11}>活动摄像机 ... <ChevronDown size={11} /></FooterSelect>
			<FooterSelect $w={69} $ml={11}>1 个... <ChevronDown size={11} /></FooterSelect>
		</PanelFooter>
	</Panel>
)

const MotionPanel = () => (
	<Panel $w={635} $ml={3}>
		<TabRow $pl={10}>
			<Tab $fs={13}>AE脚本管理器</Tab>
			<Tab $fs={11} $ml={34}>Duik Bassel.2</Tab>
			<Tab $fs={11} $ml={36} $active $gap={10}>Motion 4 <Burger /></Tab>
			<Tab $fs={11} $ml={18}>Cloners+Effectors</Tab>
		</TabRow>
		<MotionBody>
			<NavLine>
				<NavGroup $w={534}>
					<NavCell $on><HouseIcon /></NavCell>
					<NavCell><DropIcon /></NavCell>
					<NavCell><LayoutGrid size={24} strokeWidth={1.1} /></NavCell>
					<NavCell><ZeroIcon /></NavCell>
				</NavGroup>
				<NavGroup $w={73}>
					<NavCell><FlipSearch size={25} strokeWidth={1.2} /></NavCell>
				</NavGroup>
			</NavLine>
			<MotionGrid>
				<MotionLeft>
					<BoxPair>
						<GraphBox $w={227} $h={226}><GoldLine /></GraphBox>
						<DotGrid $w={226} $h={226}>
							{Array.from({ length: 9 }, (_, i) => <Dot key={i} />)}
						</DotGrid>
					</BoxPair>
					<ShapeBox $h={81}>
						<ShapeRow>
							<Stepper>
								<StepNum $grow={3}>0</StepNum>
								<StepNum $grow={2}><ChevronRight size={14} strokeWidth={1.2} /></StepNum>
							</Stepper>
							<ShapeGroup>
								<svg width="14" height="14" viewBox="0 0 14 14" fill="none" stroke="currentColor"><circle cx="7" cy="7" r="6.5" /></svg>
								<svg width="14" height="14" viewBox="0 0 14 14" fill="none" stroke="currentColor"><path d="M7 .7L12.5 7 7 13.3 1.5 7z" /></svg>
								<svg width="14" height="14" viewBox="0 0 14 14" fill="none" stroke="currentColor"><rect x="1" y=".5" width="12" height="13" rx="1" /></svg>
							</ShapeGroup>
							<Stepper>
								<StepNum $grow={2}><ChevronLeft size={14} strokeWidth={1.2} /></StepNum>
								<StepNum $grow={3}>0</StepNum>
							</Stepper>
						</ShapeRow>
						<SliderRow>
							<SliderTrack />
							<BigDigit>0</BigDigit><BigDigit>0</BigDigit><BigDigit>0</BigDigit>
							<SliderTrack />
						</SliderRow>
					</ShapeBox>
					<ActionBar $h={47}>
						<ActionCell><LayersIcon /></ActionCell>
						<ActionCell $line><Signpost size={22} strokeWidth={1.2} /></ActionCell>
						<ActionCell $line><Anchor size={22} strokeWidth={1.1} /></ActionCell>
					</ActionBar>
				</MotionLeft>
				<MotionRight>
					<ToolCard><AnimoIcon />Animo</ToolCard>
					<ToolCard><Command size={24} strokeWidth={1.1} />Delay</ToolCard>
					<ToolCard><GrabIcon />Grab</ToolCard>
					<ToolCard><NullIcon />Null</ToolCard>
					<ToolCard><TextureIcon />Texture</ToolCard>
				</MotionRight>
			</MotionGrid>
			<MotionBottom>
				<BottomRow $gap={5}>
					<ActionBar $h={35} $w={203}><ActionCell><CardsIcon /></ActionCell></ActionBar>
					<ActionBar $h={35} $w={202}>
						<ActionCell><Pointer size={22} strokeWidth={1.1} /></ActionCell>
						<ActionCell $dim><Meditate /></ActionCell>
					</ActionBar>
					<ActionBar $h={35} $w={203}><ActionCell><CurveIcon /></ActionCell></ActionBar>
				</BottomRow>
				<BottomRow $gap={7}>
					<RoundBtn><SlidersIcon /></RoundBtn>
					<MBar>M<sup>4</sup></MBar>
					<RoundBtn><TriangleIcon /></RoundBtn>
				</BottomRow>
			</MotionBottom>
		</MotionBody>
	</Panel>
)

const CharHalfRow = ({ icon, fs, value, unit, dim }) => (
	<CharHalf>
		<CharIcon $fs={fs}>{icon}</CharIcon>
		<CharValue $dim={dim}>{value}{unit && <em>{unit}</em>}</CharValue>
		<Caret />
	</CharHalf>
)

const RightStack = () => (
	<Panel $w={218} $ml={4}>
		{['信息', '音频', '预览', '效果和预设'].map((t, i) => <StackItem key={t} $h={i === 0 ? 28 : 30}>{t}</StackItem>)}
		<StackHeader>字符 <Burger /></StackHeader>
		<CharBody>
			<FontArea>
				<FontSelects>
					<FontSelect>Georgia <span><ChevronDown size={10} /></span></FontSelect>
					<FontSelect>Regular <span><ChevronDown size={10} /></span></FontSelect>
				</FontSelects>
				<ColorArea>
					<Dropper><PenTool size={18} strokeWidth={1.3} /></Dropper>
					<MiniBW />
					<ColorBack width="30" height="30" viewBox="0 0 30 30">
						<rect x=".5" y=".5" width="29" height="29" fill="#fff" stroke="#000" />
						<rect x="8" y="8" width="14" height="14" fill="#232323" />
						<path d="M1 29L29 1" stroke="#c8141c" strokeWidth="2.5" />
					</ColorBack>
					<ColorTop />
					<NoneSwatch width="11" height="11" viewBox="0 0 11 11">
						<rect x=".5" y=".5" width="10" height="10" fill="#f4f4f4" stroke="#888" />
						<path d="M1 10L10 1" stroke="#c8141c" />
					</NoneSwatch>
				</ColorArea>
			</FontArea>
			<CharDivider />
			<CharRow>
				<CharHalfRow icon="тT" value="300" unit="像素" />
				<CharHalfRow icon="‡A" value="300" unit="像素" />
			</CharRow>
			<CharRow>
				<CharHalfRow icon="VA" fs={12} value="度量标准" dim />
				<CharHalfRow icon="VA" fs={12} value="0" />
			</CharRow>
			<CharDivider $m="6px 0 2px" />
			<CharRow>
				<LeadHalf>
					<CharIcon>≡</CharIcon>
					<CharValue>-<em>像素</em></CharValue>
					<Caret />
				</LeadHalf>
				<LeadSelect><ChevronDown size={10} /></LeadSelect>
			</CharRow>
			<CharDivider $m="4px 0 3px" />
			<CharRow>
				<CharHalfRow icon="↕T" value="100" unit="%" />
				<CharHalfRow icon="T" value="100" unit="%" />
			</CharRow>
			<CharRow $h={22}>
				<CharHalfRow icon="Aª" fs={13} value="0" unit="像素" />
				<CharHalfRow icon="あ" fs={12} value="0" unit="%" />
			</CharRow>
			<CharDivider $m="5px 0 2px" />
			<StyleRow>
				<span>T</span><i>T</i><span>TT</span><span>Tт</span><span>T<sup>1</sup></span><span>T<sub>1</sub></span>
			</StyleRow>
		</CharBody>
		{['跟踪器', '段落', '对齐', '内容识别填充'].map(t => <StackItem key={t}>{t}</StackItem>)}
	</Panel>
)

const TimelinePanel = () => (
	<Timeline>
		<TlTabs>
			<TlTab $fs={13}>渲染队列</TlTab>
			{tlTabs.map((t, i) => (
				<TlTab key={t} $fs={13} $gap={12} $ml={i === 0 ? 48 : i === 1 ? 50 : 49}><Swatch />{t}</TlTab>
			))}
			<TlTab $fs={13} $gap={5} $ml={36} $active><X size={9} /><Swatch /><span style={{ marginLeft: 7 }}>方块左</span><Burger /></TlTab>
		</TlTabs>
		<TlMain>
			<TlLeft>
				<TlTools>
					<TimeBlock><b>00000</b><span>0:00:00:00 (30.00 fps)</span></TimeBlock>
					<SearchField $w={640}><FlipSearch size={12} /></SearchField>
					<Slot $w={22} $ml={7}><Network size={14} /></Slot>
					<Slot $w={22} $ml={10}><Stamp size={14} /></Slot>
					<Slot $w={22} $ml={4}><Copy size={14} /></Slot>
					<Slot $w={22} $ml={4}><Settings size={14} /></Slot>
					<Slot $w={22} $ml={12}><Square size={14} /></Slot>
				</TlTools>
				<TlHeader>
					<Slot $w={13} $ml={5}><SoloEye /></Slot>
					<Slot $w={15}><Volume2 size={12} /></Slot>
					<Slot $w={15}><TinyDot /></Slot>
					<Slot $w={15}><Lock size={11} /></Slot>
					<HeadSep $ml={5} />
					<Slot $w={15} $ml={10}><Tag size={13} /></Slot>
					<HeadSep $ml={5} />
					<Slot $w={15} $ml={1} $c="#888">#</Slot>
					<HeadSep $ml={17} />
					<Slot $w={52} $ml={5}>图层名称</Slot>
					<HeadSep $ml={288} />
					<Slot $w={13} $ml={5}><Stamp size={11} /></Slot>
					<Slot $w={15}><Settings size={10} /></Slot>
					<Slot $w={15}>\</Slot>
					<Slot $w={15}><i>fx</i></Slot>
					<Slot $w={15}><Copy size={11} /></Slot>
					<Slot $w={15}><Settings size={11} /></Slot>
					<Slot $w={15}><RotateCcw size={10} /></Slot>
					<Slot $w={15}><Box size={11} /></Slot>
					<HeadSep $ml={12} />
					<Slot $w={28} $ml={7}>模式</Slot>
					<Slot $w={10} $ml={45} $c="#a87a50">T</Slot>
					<Slot $w={54} $ml={9}>轨道遮罩</Slot>
					<HeadSep $ml={59} />
					<Slot $w={68} $ml={6}>父级和链接</Slot>
					<HeadSep $ml={41} />
				</TlHeader>
				{layers.map((name, i) => (
					<LayerRow key={name}>
						<Slot $w={22} $ml={1}><SoloEye /></Slot>
						<DarkSq $ml={11} /><DarkSq $ml={2} />
						<Slot $w={21} $ml={2} $c="#8a8a8a"><ChevronRight size={10} /></Slot>
						<LabelBlock />
						<LayerNum>{i + 1}</LayerNum>
						<Slot $w={16} $ml={15}><CompIcon /></Slot>
						<LayerName>{name}</LayerName>
						<Slot $w={13}><Stamp size={11} /></Slot>
						<DarkSq $ml={1} />
						<DarkSq $ml={2}><Minus size={13} style={{ transform: 'rotate(-45deg)' }} /></DarkSq>
						<DarkSq $ml={32} /><DarkSq $ml={2} />
						<CubeCell $first={i === 0} $last={i === layers.length - 1}><Box size={10} /></CubeCell>
						<RowSelect $w={68} $ml={17}>正常 <ChevronDown size={10} /></RowSelect>
						<DarkSq $ml={5} />
						<Slot $w={16} $ml={4}><Spiral /></Slot>
						<RowSelect $w={68} $ml={1}>无 <ChevronDown size={10} /></RowSelect>
						<Slot $w={16} $ml={35}><Spiral size={12} /></Slot>
						<RowSelect $w={89} $ml={5}>无 <ChevronDown size={10} /></RowSelect>
					</LayerRow>
				))}
				<TlFill />
			</TlLeft>
			<Graph>
				<NavTrack>
					<BlueCap $w={3} $left /><GrayFill $c="#6a6a6a" /><BlueCap $w={7} />
				</NavTrack>
				<Ruler>
					{ticks.map((t, i) => <RulerCell key={t} $first={i === 0}>{t}</RulerCell>)}
				</Ruler>
				<WorkLine>
					<BlueCap $w={3} $left /><GrayFill $c="#646464" /><BlueCap $w={7} />
				</WorkLine>
				<GreenLine />
				<GraphRows>
					{layers.map(name => <BarRow key={name}><Bar /></BarRow>)}
				</GraphRows>
				<GraphFill />
				<Playhead />
				<RightMarker>
					<svg width="11" height="15" viewBox="0 0 11 15"><path d="M0 0h11v9l-5.5 6L0 9z" fill="#aaa" /></svg>
					<svg width="14" height="13" viewBox="0 0 14 13" fill="none" stroke="#bbb"><path d="M7 1L1 8h6" /><circle cx="7" cy="9" r="2.5" /><path d="M9 3h5v5H9z" fill="#bbb" /></svg>
				</RightMarker>
			</Graph>
		</TlMain>
		<StatusBar>
			<StatusLeft>
				<FooterIcon $w={20} $c={BLUE}><Copy size={13} /></FooterIcon>
				<FooterIcon $w={18} $c={BLUE}><Copy size={13} /></FooterIcon>
				<FooterIcon $w={18}><MoveVertical size={13} /></FooterIcon>
				<FooterIcon $w={18}><Rocket size={13} /></FooterIcon>
				<StatusLabel>帧渲染时间</StatusLabel>
				<StatusGreen>6毫秒</StatusGreen>
			</StatusLeft>
			<ZoomSlider>
				<svg width="12" height="6" viewBox="0 0 12 6"><path d="M0 6l4-4 2-2 6 6z" fill="#aaa" /></svg>
				<ZoomKnob /><ZoomTrack />
				<svg width="18" height="8" viewBox="0 0 18 8"><path d="M0 8l4-5 2 2 3-5 9 8z" fill="#aaa" /></svg>
			</ZoomSlider>
		</StatusBar>
	</Timeline>
)

export default function App() {
	return (
		<Shell>
			<GlobalStyle />
			<TitleBar>
				<AeLogo>Ae</AeLogo>
				Adobe After Effects 2023 - C:\Users\PC\Desktop\教程.aep *
				<WinButtons>
					<Minus size={13} /><Copy size={13} /><X size={14} />
				</WinButtons>
			</TitleBar>
			<MenuBar>{menus.map(m => <span key={m}>{m}</span>)}</MenuBar>
			<Toolbar>
				<ToolGroup $plain $ml={0}><ToolSlot><Home size={18} fill="#bcbcbc" /></ToolSlot></ToolGroup>
				<ToolGroup>
					<ToolSlot $on><Arrow fill={BLUE} /></ToolSlot>
					<ToolSlot><Hand size={18} /></ToolSlot>
					<ToolSlot><FlipSearch size={18} /></ToolSlot>
				</ToolGroup>
				<ToolGroup>
					<ToolSlot><RotateCcw size={18} /></ToolSlot>
					<ToolSlot><Move size={18} /></ToolSlot>
					<ToolSlot><MoveVertical size={18} /></ToolSlot>
				</ToolGroup>
				<ToolGroup>
					<ToolSlot><RotateCcw size={18} /></ToolSlot>
					<ToolSlot><Maximize size={17} /></ToolSlot>
				</ToolGroup>
				<ToolGroup>
					<ToolSlot><Square size={17} fill="#444" /></ToolSlot>
					<ToolSlot><PenTool size={17} /></ToolSlot>
					<ToolSlot><Type size={18} /></ToolSlot>
				</ToolGroup>
				<ToolGroup>
					<ToolSlot><Paintbrush size={17} /></ToolSlot>
					<ToolSlot><Stamp size={17} /></ToolSlot>
					<ToolSlot><Eraser size={17} /></ToolSlot>
				</ToolGroup>
				<ToolGroup><ToolSlot><Puppet /></ToolSlot></ToolGroup>
				<ToolGroup><ToolSlot><Pin size={17} fill="#bcbcbc" /></ToolSlot></ToolGroup>
				<ToolGroup $ml={37}>
					<ToolSlot $on><Axis3d size={16} /></ToolSlot>
					<ToolSlot><Axis3d size={16} /></ToolSlot>
					<ToolSlot><Box size={15} /></ToolSlot>
				</ToolGroup>
				<ToolGroup>
					<ToolSlot $on><Arrow fill={BLUE} /></ToolSlot>
					<ToolSlot $w={22}><Move size={16} /></ToolSlot>
					<ToolSlot $w={23}><Square size={16} /></ToolSlot>
					<ToolSlot $w={23}><RotateCcw size={16} /></ToolSlot>
					<ToolText $ml={8}>通用</ToolText>
				</ToolGroup>
				<ToolGroup $ml={3}>
					<CheckBox>✓</CheckBox>
					<ToolText>对齐</ToolText>
				</ToolGroup>
				<ToolGroup $plain $ml={37}>
					<ToolSlot $w={20}><ChevronsRight size={14} style={{ transform: 'rotate(-45deg)' }} /></ToolSlot>
					<ToolSlot $w={20} $on><Maximize size={13} /></ToolSlot>
				</ToolGroup>
				<Workspace>
					<WsItem $active $mr={13}>默认</WsItem>
					<Burger style={{ color: BLUE, marginRight: 26 }} />
					<WsItem>审阅</WsItem>
					<WsItem>学习</WsItem>
					<WsItem>小屏幕</WsItem>
					<WsItem>标准</WsItem>
					<WsItem $mr={40}>库</WsItem>
					<ChevronsRight size={13} color="#bbb" />
					<SearchHelp><FlipSearch size={13} />搜索帮助</SearchHelp>
				</Workspace>
			</Toolbar>
			<TopRow>
				<ProjectPanel />
				<CompPanel />
				<MotionPanel />
				<RightStack />
			</TopRow>
			<TimelinePanel />
			<ArrowLayer width="2560" height="1398" viewBox="0 0 2560 1398">
				<path d="M441 387L338 342" stroke="#e8202a" strokeWidth="5" strokeLinecap="round" />
				<path d="M318 333L342 333 334 351z" fill="#e8202a" />
				<path d="M527 702L448 837" stroke="#e8202a" strokeWidth="5" strokeLinecap="round" />
				<path d="M436 858L458 843 439 832z" fill="#e8202a" />
			</ArrowLayer>
		</Shell>
	)
}
